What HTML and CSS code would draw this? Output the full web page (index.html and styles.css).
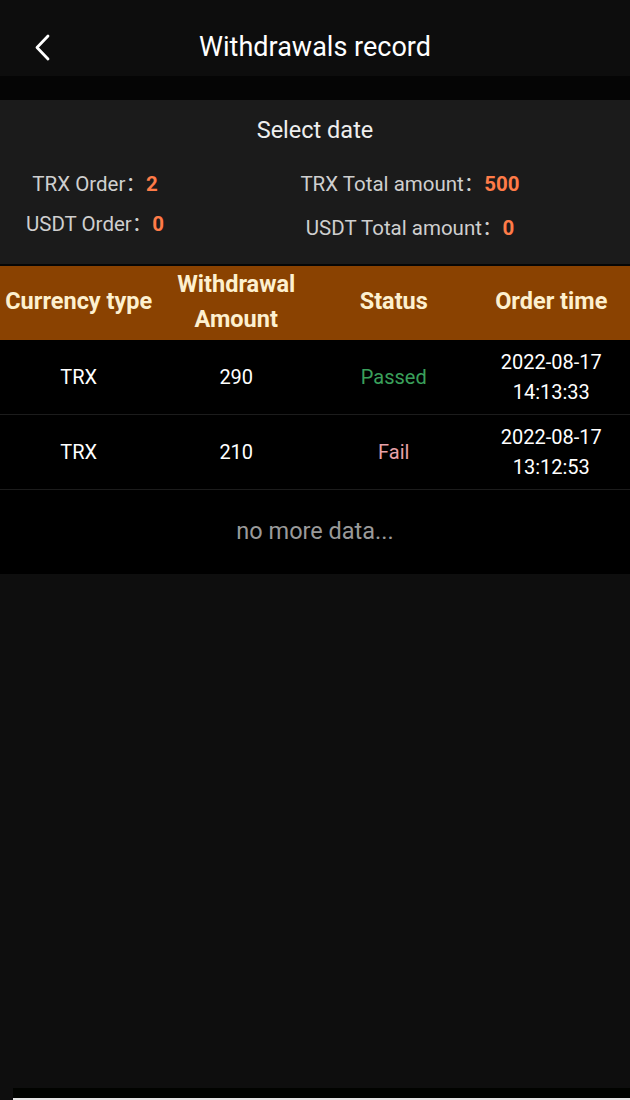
FILE: index.html
```html
<!DOCTYPE html>
<html>
<head>
<meta charset="utf-8">
<link rel="stylesheet" href="styles.css">
</head>
<body>
<div class="page">
  <header class="topbar">
    <svg class="back" width="20" height="30" viewBox="0 0 20 30"><path d="M15 4 L4 15.5 L15 27" fill="none" stroke="#fff" stroke-width="2.8" stroke-linecap="round" stroke-linejoin="round"/></svg>
    <h1 class="title">Withdrawals record</h1>
  </header>
  <div class="gap"></div>
  <section class="summary">
    <div class="select-date">Select date</div>
    <div class="stats">
      <div class="stat s1">TRX Order：<b>2</b></div>
      <div class="stat s2">TRX Total amount：<b>500</b></div>
      <div class="stat s3">USDT Order：<b>0</b></div>
      <div class="stat s4">USDT Total amount：<b>0</b></div>
    </div>
  </section>
  <div class="table">
    <div class="thead">
      <div>Currency type</div>
      <div>Withdrawal<br>Amount</div>
      <div>Status</div>
      <div>Order time</div>
    </div>
    <div class="row">
      <div>TRX</div>
      <div>290</div>
      <div class="passed">Passed</div>
      <div class="time">2022-08-17<br>14:13:33</div>
    </div>
    <div class="row">
      <div>TRX</div>
      <div>210</div>
      <div class="fail">Fail</div>
      <div class="time">2022-08-17<br>13:12:53</div>
    </div>
    <div class="nomore">no more data...</div>
  </div>
  <div class="rest"></div>
  <div class="bottom"></div>
</div>
</body>
</html>
```

FILE: styles.css
```css
* { box-sizing: border-box; margin: 0; padding: 0; }
html, body { background: #0e0e0e; }
body {
  margin: 0;
  font-family: Roboto, "Noto Sans CJK SC", "Noto Sans", "Liberation Sans", sans-serif;
  color: #fff;
}
.page {
  width: 630px;
  height: 1100px;
  display: flex;
  flex-direction: column;
  background: #0e0e0e;
}
.topbar {
  height: 76px;
  background: #0d0d0d;
  display: flex;
  align-items: center;
  justify-content: center;
  position: relative;
  padding-top: 18px;
}
.back {
  position: absolute;
  left: 33px;
  top: 32px;
}
.title {
  font-size: 27px;
  font-weight: 400;
  color: #fff;
  line-height: 32px;
}
.gap {
  height: 24px;
  background: #050505;
}
.summary {
  background: #1b1b1b;
  height: 164px;
  padding-top: 14px;
}
.select-date {
  text-align: center;
  font-size: 23.5px;
  color: #eee;
  line-height: 32px;
}
.stats {
  display: grid;
  grid-template-columns: 190px 440px;
  margin-top: 24px;
  row-gap: 12px;
}
.stat {
  font-size: 20.5px;
  color: #cfcfcf;
  line-height: 28px;
  text-align: center;
}
.stat b {
  color: #ff7b48;
  font-weight: 700;
}
.s4 { margin-top: 4px; }
.table {
  background: #000;
  border-top: 2px solid #060606;
}
.thead {
  display: grid;
  grid-template-columns: repeat(4, 1fr);
  background: #8a4201;
  height: 74px;
  align-items: center;
  text-align: center;
  font-size: 23.5px;
  font-weight: 700;
  color: #fdf0cf;
  line-height: 35px;
  padding-bottom: 3px;
}
.row {
  display: grid;
  grid-template-columns: repeat(4, 1fr);
  height: 75px;
  align-items: center;
  text-align: center;
  font-size: 20px;
  color: #fff;
  border-bottom: 1px solid #1c1c1c;
}
.row:last-of-type { border-bottom: none; }
.row .time { line-height: 30px; }
.passed { color: #3aa05b; }
.fail { color: #e8a1a8; }
.nomore {
  height: 84px;
  display: flex;
  align-items: center;
  justify-content: center;
  font-size: 23.5px;
  color: #9a9a9a;
  padding-bottom: 2px;
}
.rest {
  flex: 1;
  background: #0e0e0e;
}
.bottom {
  height: 12px;
  background: #010300;
  border-bottom: 2px solid #e4e4e4;
  margin-left: 13px;
}
```
